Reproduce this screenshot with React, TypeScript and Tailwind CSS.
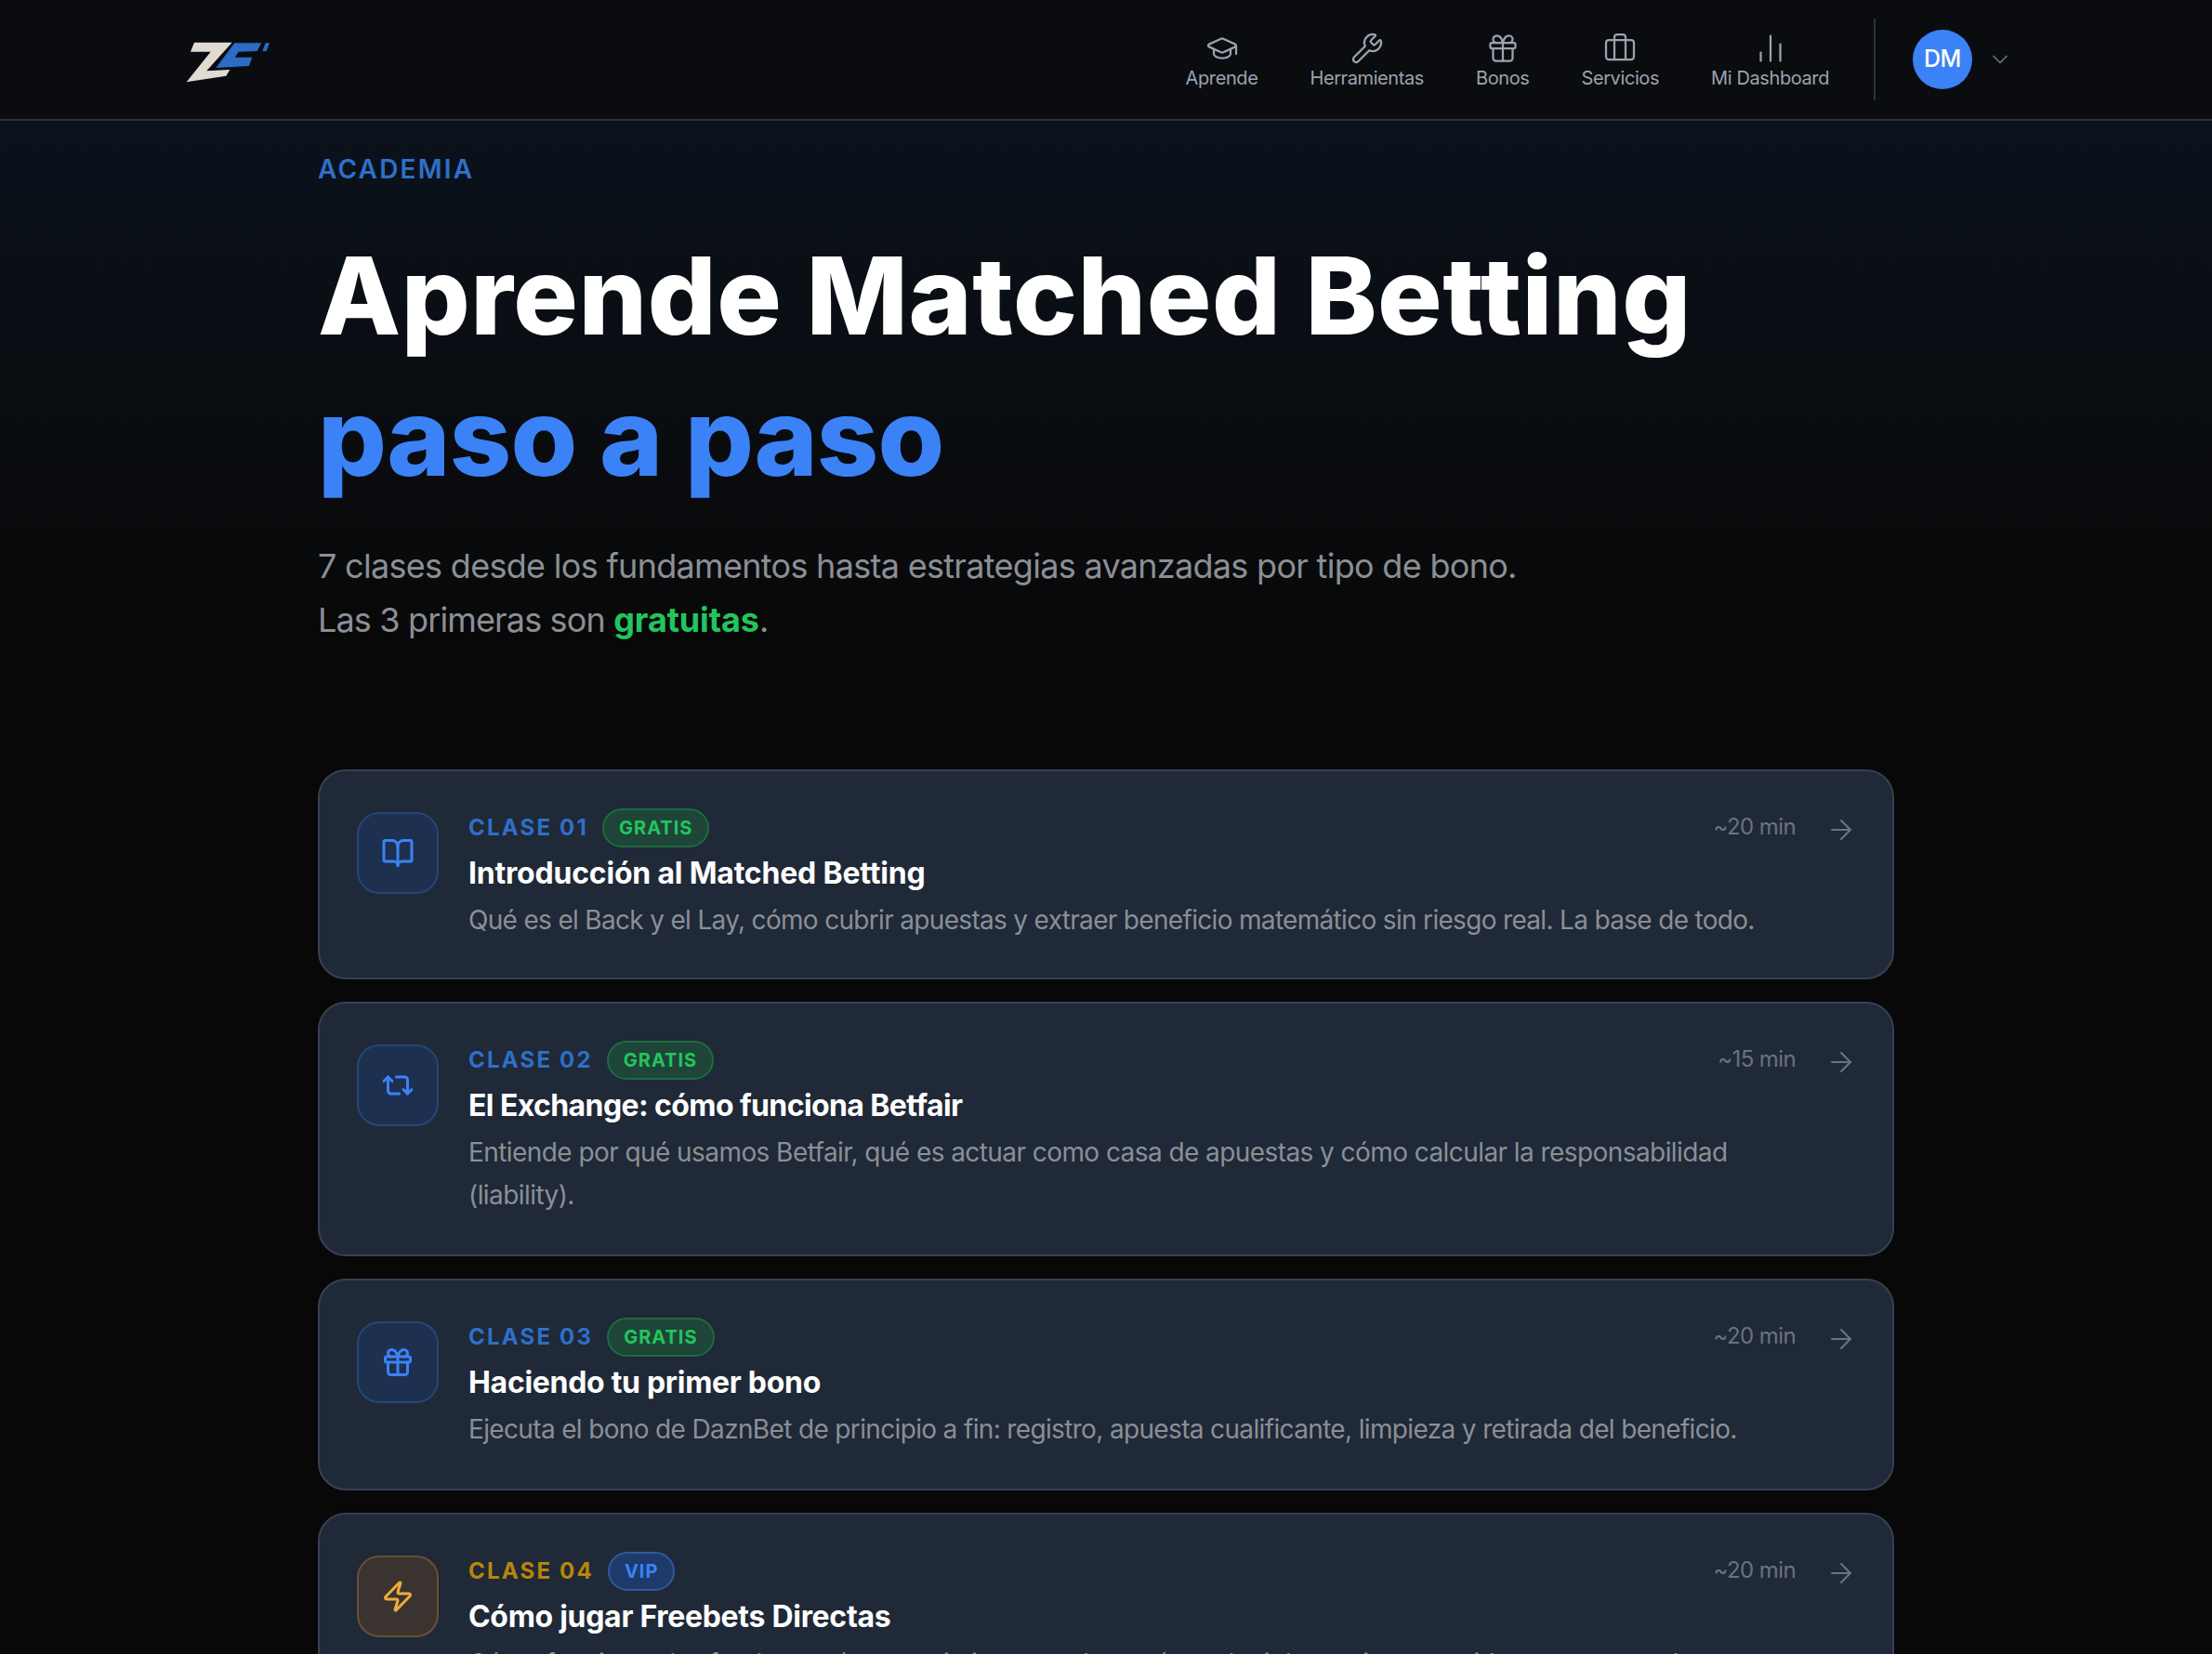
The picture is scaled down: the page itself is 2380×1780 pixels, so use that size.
import { GraduationCap, Wrench, Gift, Briefcase, ChartNoAxesColumn, ChevronDown, BookOpen, Repeat2, Zap, ArrowRight } from "lucide-react";

const font = "font-['Inter','Liberation_Sans',sans-serif]";

const nav = [
  { label: "Aprende", Icon: GraduationCap },
  { label: "Herramientas", Icon: Wrench },
  { label: "Bonos", Icon: Gift },
  { label: "Servicios", Icon: Briefcase },
  { label: "Mi Dashboard", Icon: ChartNoAxesColumn },
];

const lessons = [
  { n: "CLASE 01", tag: "GRATIS", time: "~20 min", title: "Introducción al Matched Betting", desc: "Qué es el Back y el Lay, cómo cubrir apuestas y extraer beneficio matemático sin riesgo real. La base de todo.", Icon: BookOpen, gold: false, card: "pb-[39px]", titleCls: "tracking-[-0.2px]", descCls: "tracking-[-0.68px]" },
  { n: "CLASE 02", tag: "GRATIS", time: "~15 min", title: "El Exchange: cómo funciona Betfair", desc: "Entiende por qué usamos Betfair, qué es actuar como casa de apuestas y cómo calcular la responsabilidad (liability).", Icon: Repeat2, gold: false, card: "pb-[41px]", titleCls: "tracking-[-0.6px]", descCls: "tracking-[-0.57px]" },
  { n: "CLASE 03", tag: "GRATIS", time: "~20 min", title: "Haciendo tu primer bono", desc: "Ejecuta el bono de DaznBet de principio a fin: registro, apuesta cualificante, limpieza y retirada del beneficio.", Icon: Gift, gold: false, card: "pb-[41px]", titleCls: "tracking-[-0.3px]", descCls: "tracking-[-0.65px]" },
  { n: "CLASE 04", tag: "VIP", time: "~20 min", title: "Cómo jugar Freebets Directas", desc: "Cómo funcionan las freebets, cómo maximizar su valor y cómo elegir los mejores partidos para extraerlas.", Icon: Zap, gold: true, card: "pb-[40px]", titleCls: "tracking-[-0.3px]", descCls: "tracking-[-0.65px]" },
];

function Logo() {
  return (
    <svg width="92" height="46" viewBox="148 138 276 132" className="mt-[6px]">
      <path d="M175 140L297 140L215 232L290 228L278 248L150 268L228 170L163 170Z" fill="#e0dbd3" />
      <path d="M305 142L392 142L378 168L318 170L306 188L362 188L352 216L245 222Z" fill="#2b6cc4" />
      <path d="M405 142L418 142L408 168L395 168Z" fill="#2b6cc4" />
    </svg>
  );
}

export default function App() {
  return (
    <div className={`${font} h-[1780px] overflow-hidden bg-[#080808] text-white`}>
      <header className="h-[130px] bg-[#0a0c10] border-b-2 border-[#2b3240] flex items-center justify-between pl-[200px] pr-[214px]">
        <Logo />
        <div className="flex items-center">
          <nav className="flex gap-[56px] pt-[4px]">
            {nav.map(({ label, Icon }) => (
              <div key={label} className="flex flex-col items-center text-[#9ca3af]">
                <Icon size={36} strokeWidth={1.5} />
                <span className="text-[20px] leading-[28px] tracking-[-0.4px]">{label}</span>
              </div>
            ))}
          </nav>
          <div className="w-[2px] h-[88px] bg-[#2b3240] ml-[48px] mr-[40px]" />
          <div className="w-[64px] h-[64px] rounded-full bg-[#3b82f6] flex items-center justify-center text-[25px] font-medium tracking-[-0.5px]">DM</div>
          <ChevronDown size={28} strokeWidth={1.5} className="ml-[16px] text-[#6b7280]" />
        </div>
      </header>

      <section className="bg-gradient-to-b from-[#0b121c] to-[#080808] px-[342px] pt-[32px] h-[560px]">
        <p className="text-[28px] leading-[40px] font-semibold tracking-[2.2px] text-[#2f6fc9]">ACADEMIA</p>
        <h1 className="mt-[40px] text-[116px] leading-[152px] font-extrabold tracking-[0.55px]">
          Aprende Matched Betting
          <br />
          <span className="text-[#3b82f6] tracking-[-0.8px]">paso a paso</span>
        </h1>
        <p className="mt-[34px] text-[36px] leading-[58px] text-[#8b8f96] tracking-[-0.7px]">
          7 clases desde los fundamentos hasta estrategias avanzadas por tipo de bono.
          <br />
          <span className="tracking-[-0.85px]">Las 3 primeras son </span>
          <strong className="font-bold text-[#22c55e] tracking-[-0.1px]">gratuitas</strong>.
        </p>
      </section>

      <main className="px-[342px] pt-[138px] flex flex-col gap-[24px]">
        {lessons.map(({ n, tag, time, title, desc, Icon, gold, card, titleCls, descCls }) => (
          <article key={n} className={`flex gap-[32px] bg-[#1f2937] border-2 border-[#374151] rounded-[30px] pl-[40px] pr-[40px] pt-[44px] ${card}`}>
            <div className={`w-[88px] h-[88px] shrink-0 rounded-[24px] border-2 flex items-center justify-center ${gold ? "bg-[#3a3330] border-[#6b4f35] text-[#f0ab3c]" : "bg-[#1e3050] border-[#264677] text-[#3b82f6]"}`}>
              <Icon size={36} strokeWidth={2} />
            </div>
            <div className="flex-1 -mt-[4px]">
              <div className="flex items-center">
                <span className={`text-[24px] leading-[40px] font-bold tracking-[2.2px] ${gold ? "text-[#b8860b]" : "text-[#2f6fc9]"}`}>{n}</span>
                <span className={`ml-[15px] h-[42px] px-[16px] rounded-full border-2 flex items-center text-[20px] font-bold tracking-[1px] ${tag === "VIP" ? "bg-[#1e3a6a] border-[#2f5a9e] text-[#3b82f6]" : "bg-[#1e4538] border-[#1e6b40] text-[#22c55e]"}`}>{tag}</span>
                <span className="ml-auto -mt-[2px] text-[24px] text-[#6b7280] tracking-[-0.6px]">{time}</span>
                <ArrowRight size={34} strokeWidth={1.5} className="ml-[32px] -mr-[2px] mt-[4px] text-[#6b7280]" />
              </div>
              <h2 className={`mt-[4px] text-[32px] leading-[48px] font-bold ${titleCls}`}>{title}</h2>
              <p className={`mt-[3px] text-[28px] leading-[46px] text-[#8b8f96] pr-[80px] ${descCls}`}>{desc}</p>
            </div>
          </article>
        ))}
      </main>
    </div>
  );
}
